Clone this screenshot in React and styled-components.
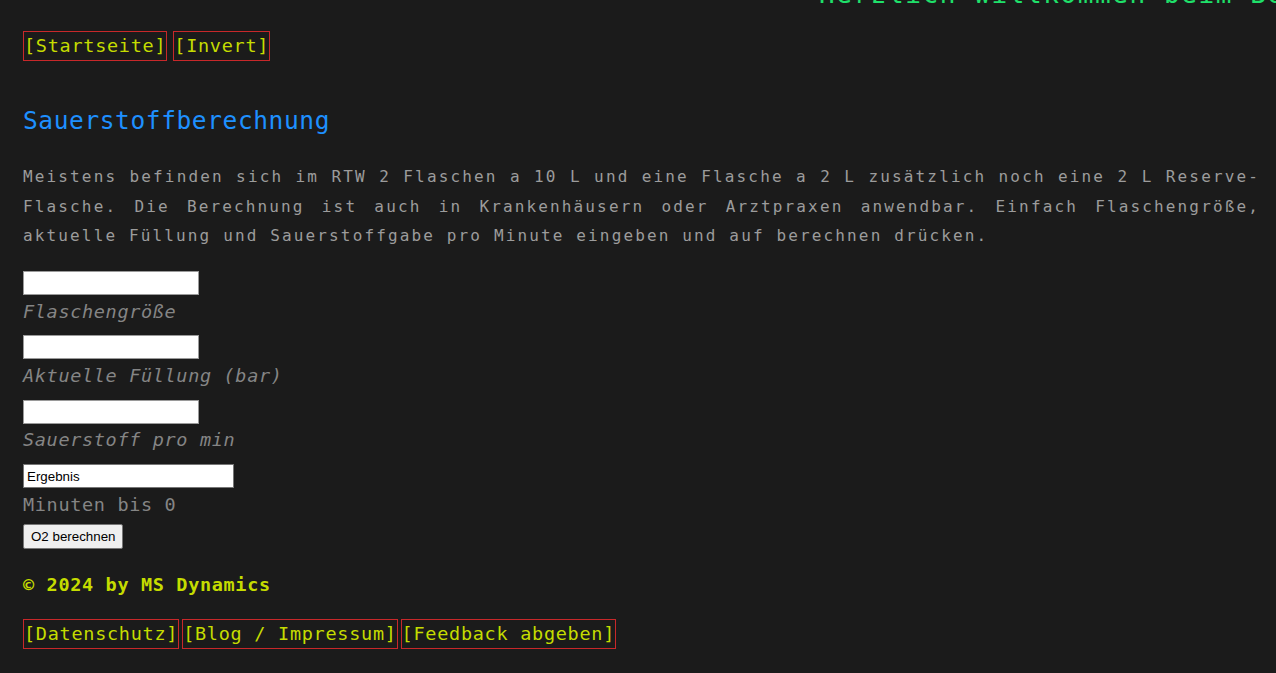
import React from "react";
import styled, { createGlobalStyle } from "styled-components";

const Global = createGlobalStyle`
  html, body { margin: 0; padding: 0; background: #1b1b1b; }
  body { font-family: "DejaVu Sans Mono", "Liberation Mono", monospace; }
`;

const Page = styled.div`
  min-height: 673px;
  padding: 0 16px 0 23px;
  box-sizing: border-box;
  background: #1b1b1b;
  overflow: hidden;
`;

const Marquee = styled.div`
  height: 6px;
  margin: 0 -16px 0 -23px;
  padding-left: 819px;
  display: flex;
  align-items: flex-end;
  overflow: hidden;
  white-space: nowrap;
  color: #1fe06a;
  font-size: 26px;
  line-height: 24px;
  letter-spacing: 1.6px;
`;

const LinkRow = styled.nav`
  display: flex;
  gap: ${(p) => p.$gap}px;
  margin-top: ${(p) => p.$top}px;
`;

const BoxLink = styled.a`
  display: block;
  border: 1px solid #c8282a;
  color: #c5dc00;
  text-decoration: none;
  font-size: 18.5px;
  letter-spacing: 0.72px;
  line-height: 22px;
  padding-top: 3px;
  height: 25px;
  box-sizing: content-box;
  white-space: pre;
`;

const Title = styled.h2`
  margin: 44px 0 0;
  font-weight: normal;
  font-size: 24.5px;
  line-height: 32px;
  letter-spacing: 0.6px;
  color: #1e90ff;
`;

const Intro = styled.p`
  margin: 25px 0 0;
  font-size: 16px;
  line-height: 29.5px;
  letter-spacing: 2.14px;
  color: #9c9c9c;
  text-align: justify;
`;

const Form = styled.form`
  display: flex;
  flex-direction: column;
  align-items: flex-start;
  margin-top: 20.7px;
`;

const Field = styled.div`
  display: flex;
  flex-direction: column;
  align-items: flex-start;
  margin-bottom: ${(p) => p.$after}px;
`;

const TextInput = styled.input`
  box-sizing: border-box;
  width: ${(p) => p.$w}px;
  height: 24px;
  margin: 0;
  padding: 1px 3px;
  border: 1px solid ${(p) => (p.$dark ? "#767676" : "#9a9a9a")};
  background: #ffffff;
  color: #000;
  font-family: "Liberation Sans", Arial, sans-serif;
  font-size: 13.33px;
  outline: none;
`;

const FieldLabel = styled.label`
  display: block;
  margin-top: 3.5px;
  font-size: 18.5px;
  line-height: 25.5px;
  letter-spacing: 0.66px;
  color: #858585;
  font-style: ${(p) => (p.$italic ? "italic" : "normal")};
`;

const Button = styled.button`
  box-sizing: border-box;
  height: 25px;
  padding: 0 7px;
  margin: 0;
  background: #efefef;
  border: 1px solid #767676;
  border-radius: 2px;
  color: #000;
  font-family: "Liberation Sans", Arial, sans-serif;
  font-size: 13.33px;
`;

const Copyright = styled.div`
  margin-top: 23.3px;
  font-size: 18.5px;
  line-height: 26px;
  letter-spacing: 0.66px;
  font-weight: bold;
  color: #c5dc00;
`;

export default function App() {
  return (
    <>
      <Global />
      <Page>
        <Marquee>Herzlich willkommen beim Berechnungstool</Marquee>
        <LinkRow $gap={6} $top={25}>
          <BoxLink href="#">[Startseite]</BoxLink>
          <BoxLink href="#">[Invert]</BoxLink>
        </LinkRow>
        <Title>Sauerstoffberechnung</Title>
        <Intro>
          Meistens befinden sich im RTW 2 Flaschen a 10 L und eine Flasche a 2 L
          zusätzlich noch eine 2 L Reserve-Flasche. Die Berechnung ist auch in
          Krankenhäusern oder Arztpraxen anwendbar. Einfach Flaschengröße,
          aktuelle Füllung und Sauerstoffgabe pro Minute eingeben und auf
          berechnen drücken.
        </Intro>
        <Form onSubmit={(e) => e.preventDefault()}>
          <Field $after={11.3}>
            <TextInput $w={176} id="f1" />
            <FieldLabel $italic htmlFor="f1">Flaschengröße</FieldLabel>
          </Field>
          <Field $after={11.3}>
            <TextInput $w={176} id="f2" />
            <FieldLabel $italic htmlFor="f2">Aktuelle Füllung (bar)</FieldLabel>
          </Field>
          <Field $after={11.3}>
            <TextInput $w={176} id="f3" />
            <FieldLabel $italic htmlFor="f3">Sauerstoff pro min</FieldLabel>
          </Field>
          <Field $after={7}>
            <TextInput $w={211} $dark id="f4" value="Ergebnis" readOnly />
            <FieldLabel htmlFor="f4">Minuten bis 0</FieldLabel>
          </Field>
          <Button type="submit">O2 berechnen</Button>
        </Form>
        <Copyright>© 2024 by MS Dynamics</Copyright>
        <LinkRow $gap={3} $top={20.7}>
          <BoxLink href="#">[Datenschutz]</BoxLink>
          <BoxLink href="#">[Blog / Impressum]</BoxLink>
          <BoxLink href="#">[Feedback abgeben]</BoxLink>
        </LinkRow>
      </Page>
    </>
  );
}
